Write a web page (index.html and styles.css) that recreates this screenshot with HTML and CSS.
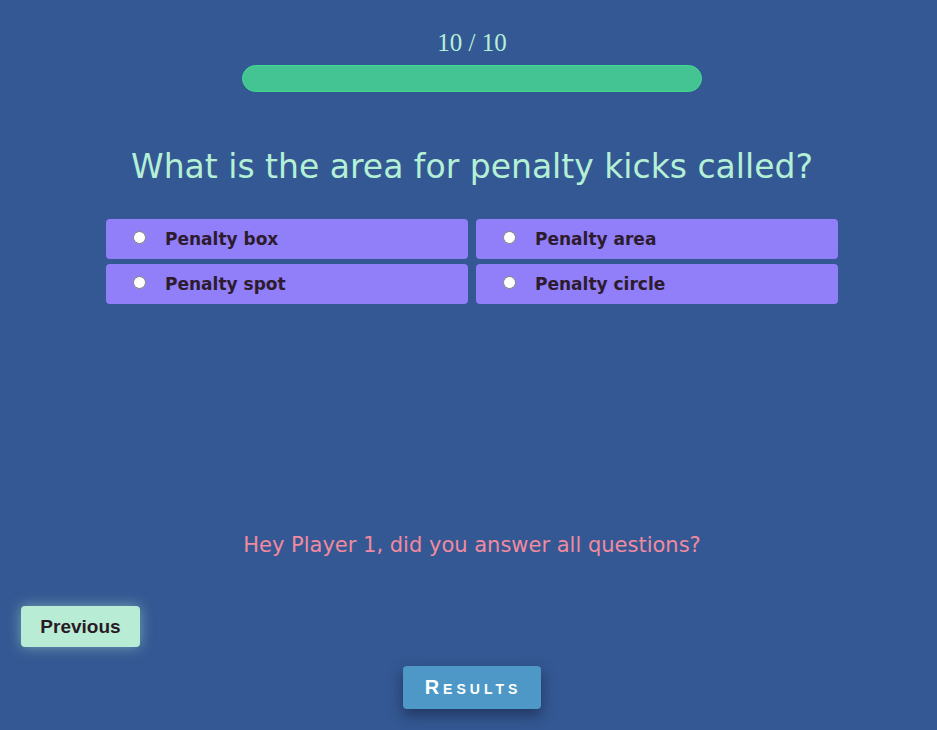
FILE: index.html
```html
<!DOCTYPE html>
<html>
<head>
<meta charset="utf-8">
<link rel="stylesheet" href="styles.css">
</head>
<body>
<main class="quiz">
  <div class="progress">
    <div class="progress-text">10 / 10</div>
    <div class="bar"><div class="bar-fill"></div></div>
  </div>
  <h1 class="question">What is the area for penalty kicks called?</h1>
  <div class="options">
    <label class="option"><input type="radio" name="a"><span>Penalty box</span></label>
    <label class="option"><input type="radio" name="a"><span>Penalty area</span></label>
    <label class="option"><input type="radio" name="a"><span>Penalty spot</span></label>
    <label class="option"><input type="radio" name="a"><span>Penalty circle</span></label>
  </div>
  <p class="message">Hey Player 1, did you answer all questions?</p>
  <div class="nav">
    <button class="prev">Previous</button>
  </div>
  <div class="results-row">
    <button class="results">Results</button>
  </div>
</main>
</body>
</html>
```
FILE: styles.css
```css
html, body {
  margin: 0;
  padding: 0;
  background: #345893;
  height: 100%;
}
.quiz {
  display: flex;
  flex-direction: column;
  align-items: center;
  padding-left: 7px;
  font-family: "DejaVu Sans", sans-serif;
}
.progress {
  display: flex;
  flex-direction: column;
  align-items: center;
  padding-top: 29px;
}
.progress-text {
  font-family: "Liberation Serif", serif;
  font-size: 25px;
  line-height: 28px;
  color: #b4f0d6;
}
.bar {
  margin-top: 8px;
  width: 460px;
  height: 27px;
  box-sizing: border-box;
  border: 1px solid #3fdc8c;
  border-radius: 14px;
  background: #45c493;
  overflow: hidden;
}
.bar-fill {
  width: 100%;
  height: 100%;
}
.question {
  margin: 53px 0 0;
  font-family: "DejaVu Sans", sans-serif;
  font-weight: 400;
  font-size: 33px;
  line-height: 44px;
  color: #b4f0d6;
}
.options {
  margin-top: 30px;
  display: grid;
  grid-template-columns: 362px 362px;
  column-gap: 8px;
  row-gap: 5px;
}
.option {
  display: flex;
  align-items: center;
  height: 40px;
  background: #917ef9;
  border-radius: 4px;
  padding-left: 27px;
  box-sizing: border-box;
  color: #2d1b2e;
  font-weight: 700;
  font-size: 17px;
}
.option input {
  margin: 0 0 4px 0;
  width: 13px;
  height: 13px;
}
.option span {
  margin-left: 19px;
  margin-bottom: 1px;
}
.message {
  margin: 227px 0 0;
  font-size: 21px;
  line-height: 28px;
  color: #f08aa0;
}
.nav {
  align-self: stretch;
  padding-left: 14px;
  margin-top: 47px;
}
.prev {
  width: 119px;
  height: 41px;
  border: none;
  border-radius: 4px;
  background: #b8ecd5;
  font-family: "Liberation Sans", Arial, sans-serif;
  font-weight: 700;
  font-size: 19px;
  color: #2a1a26;
  box-shadow: 0 0 14px rgba(184, 236, 213, 0.5);
}
.results-row {
  margin-top: 19px;
}
.results {
  width: 138px;
  height: 43px;
  border: none;
  border-radius: 4px;
  background: #4e98c8;
  color: #fff;
  font-family: "Liberation Sans", Arial, sans-serif;
  font-weight: 700;
  font-size: 20px;
  font-variant: small-caps;
  letter-spacing: 4px;
  padding-left: 8px;
  box-shadow: 0 6px 14px rgba(20, 30, 60, 0.6);
}
```
